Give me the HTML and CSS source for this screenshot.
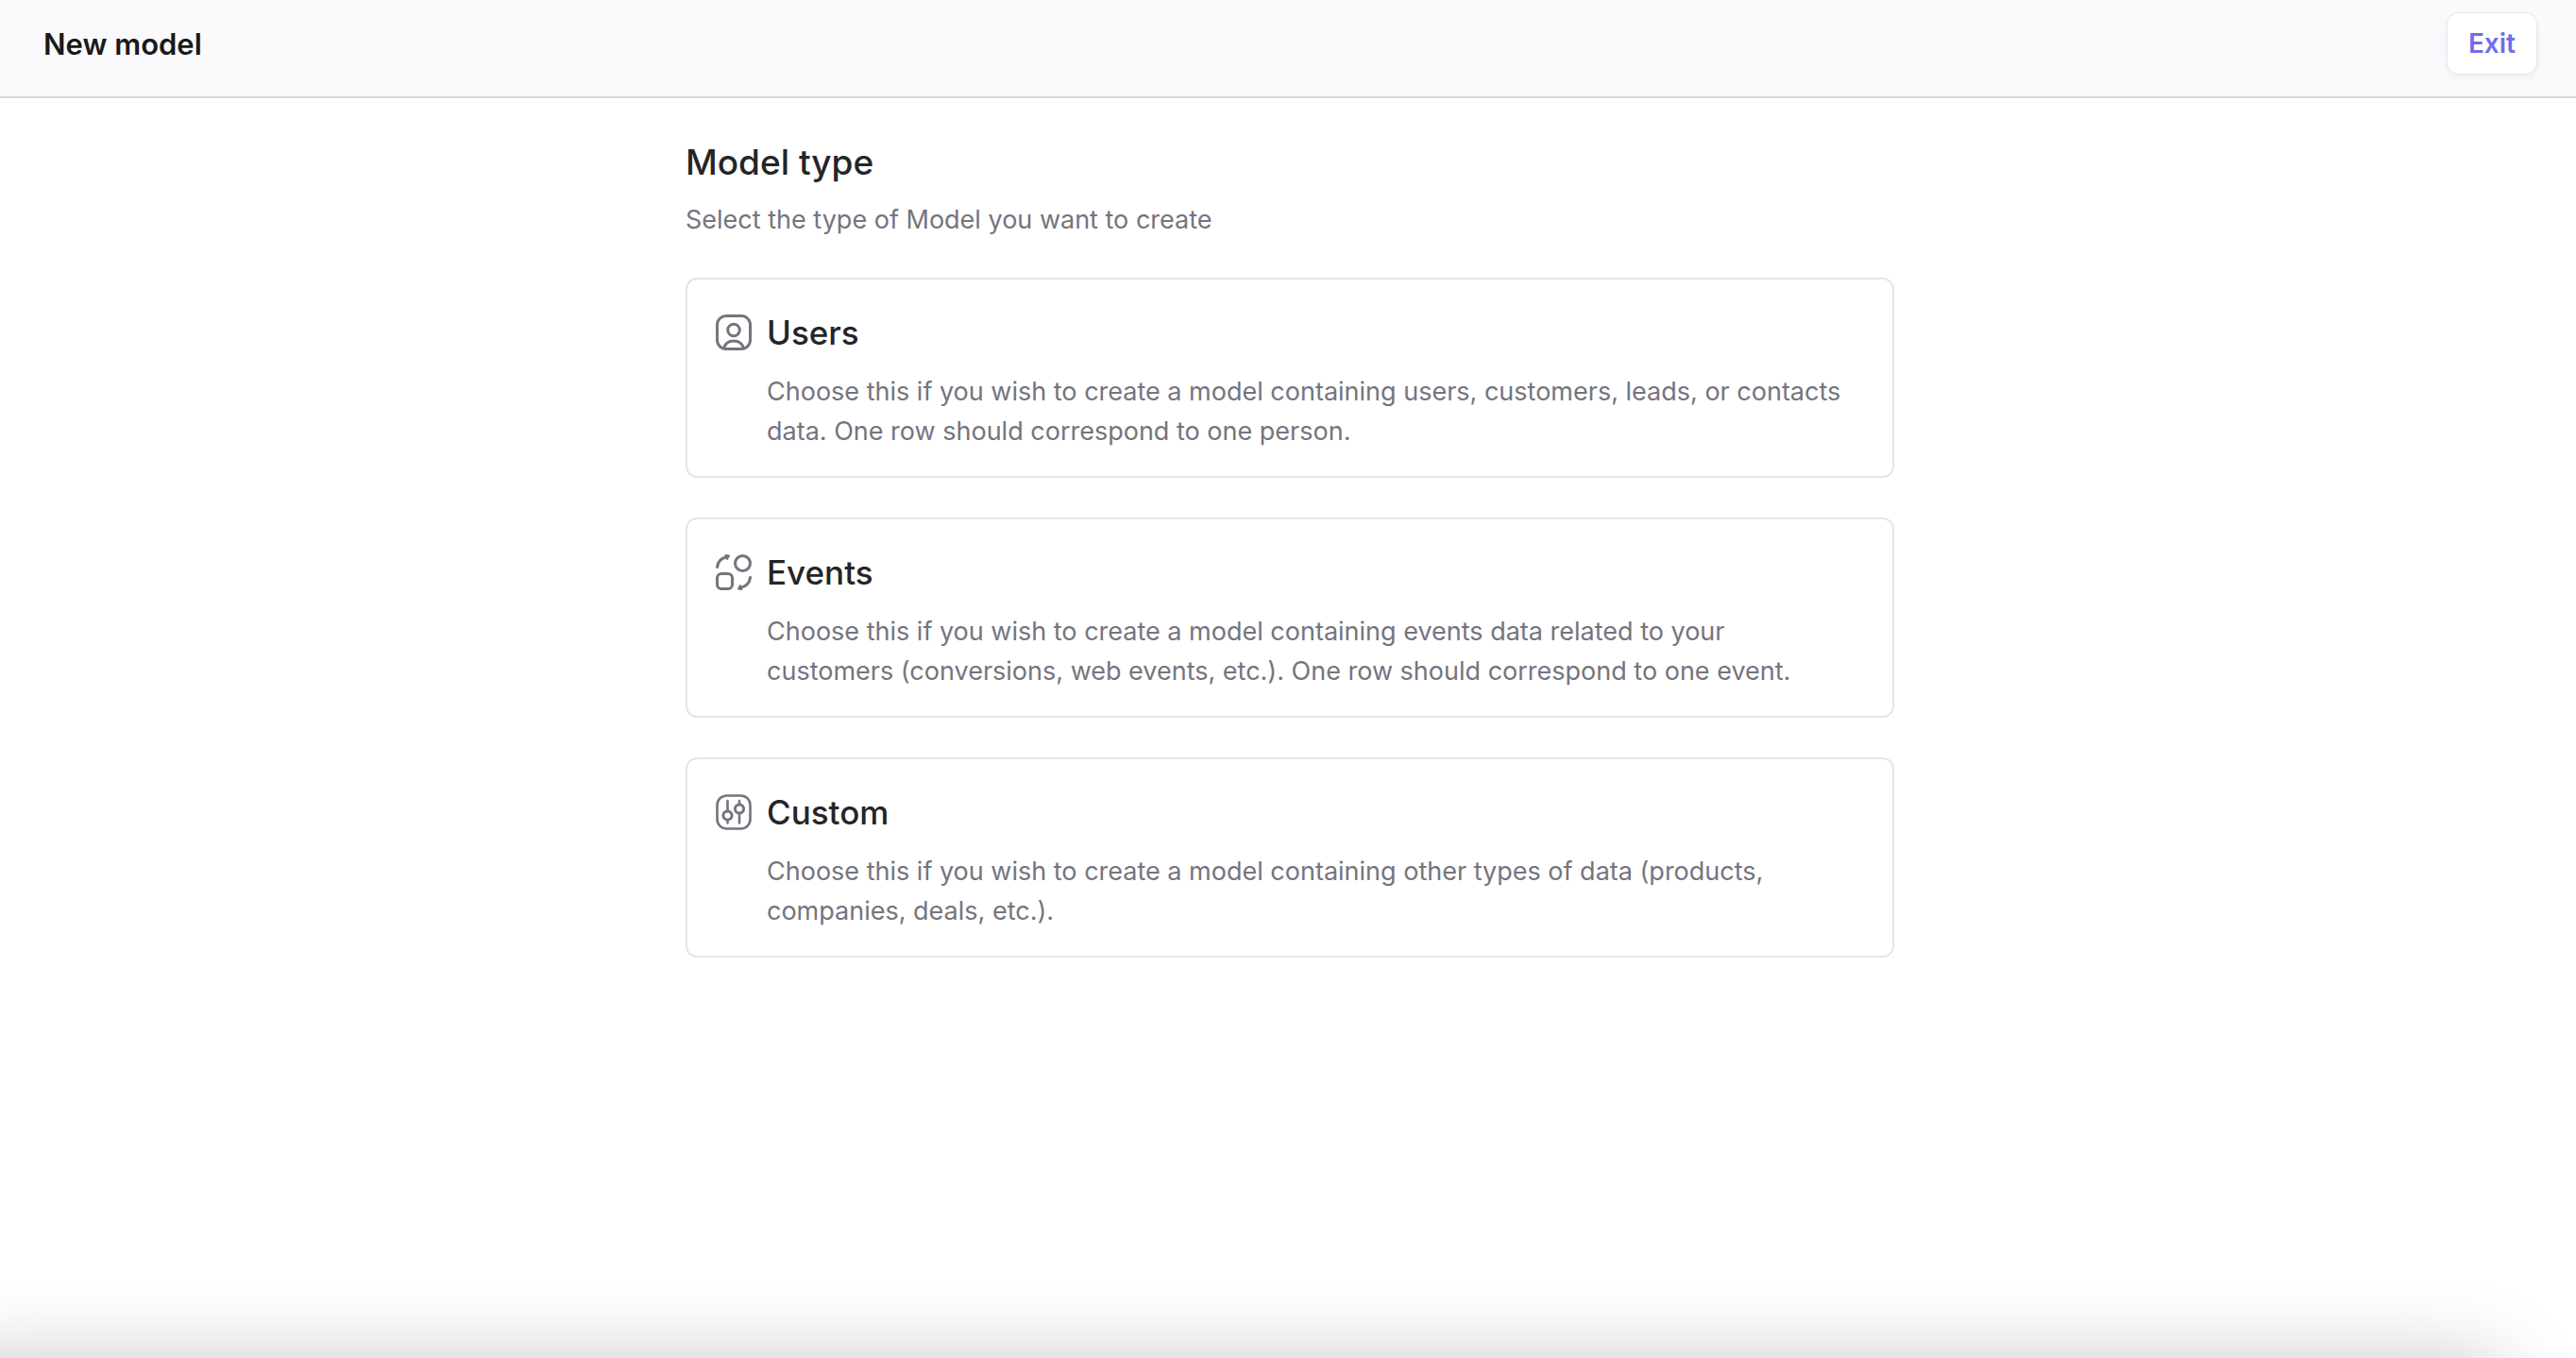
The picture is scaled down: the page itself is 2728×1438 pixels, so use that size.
FILE: index.html
```html
<!DOCTYPE html>
<html lang="en">
<head>
  <meta charset="UTF-8" />
  <meta name="viewport" content="width=device-width, initial-scale=1.0"/>
  <title>New model</title>
  <link rel="stylesheet" href="styles.css">
</head>
<body>
  <header class="topbar">
    <h1>New model</h1>
    <button class="exit-btn" type="button">Exit</button>
  </header>

  <main class="container">
    <h2>Model type</h2>
    <p class="intro">Select the type of Model you want to create</p>

    <div class="cards">
      <button class="card" type="button">
        <svg class="icon" viewBox="0 0 38 38" aria-hidden="true">
          <rect x="1.5" y="1.5" width="35" height="35" rx="9.5"/>
          <circle cx="19" cy="16.5" r="6.3"/>
          <path d="M8.5 35.5c1.5-5 5.5-7.5 10.5-7.5s9 2.5 10.5 7.5"/>
        </svg>
        <span class="card-body">
          <span class="card-title">Users</span>
          <span class="card-text">Choose this if you wish to create a model containing users, customers, leads, or contacts data. One row should correspond to one person.</span>
        </span>
      </button>

      <button class="card" type="button">
        <svg class="icon" viewBox="0 0 38 38" aria-hidden="true">
          <circle cx="28.5" cy="9.5" r="8"/>
          <rect x="1.5" y="20.5" width="16" height="16" rx="4.5"/>
          <path d="M1.5 13.5C2 8 6 3.5 11.5 3M36.5 24.5c-.5 5.5-4.5 10-10 10.5"/>
          <path class="arrow" d="M10.5 1l3.5.5-2 3.5zM27.5 37l-3.5-.5 2-3.5z"/>
        </svg>
        <span class="card-body">
          <span class="card-title">Events</span>
          <span class="card-text">Choose this if you wish to create a model containing events data related to your customers (conversions, web events, etc.). One row should correspond to one event.</span>
        </span>
      </button>

      <button class="card" type="button">
        <svg class="icon" viewBox="0 0 38 38" aria-hidden="true">
          <rect class="thin" x="1.5" y="1.5" width="35" height="35" rx="10"/>
          <circle cx="12.5" cy="22.5" r="4.6"/>
          <circle cx="25" cy="15.5" r="4.6"/>
          <path class="thin" d="M12.5 7v10M12.5 27.5v3M25 7v3.5M25 20.5v10"/>
        </svg>
        <span class="card-body">
          <span class="card-title">Custom</span>
          <span class="card-text">Choose this if you wish to create a model containing other types of data (products, companies, deals, etc.).</span>
        </span>
      </button>
    </div>
  </main>

  <div class="bottom-shade"></div>
</body>
</html>
```
FILE: styles.css
```css
* {
  box-sizing: border-box;
}
body {
  margin: 0;
  min-height: 100vh;
  display: flex;
  flex-direction: column;
  overflow-x: hidden;
  font-family: Inter, sans-serif;
  color: #252527;
  background: white;
}
.topbar {
  display: flex;
  align-items: center;
  justify-content: space-between;
  padding: 14px 42px 24px 46px;
  background: #fafafc;
  border-bottom: 2px solid #d8d7dd;
}
h1 {
  margin: 0;
  font-size: 31px;
  font-weight: 600;
  color: #19191b;
}
.exit-btn {
  height: 64px;
  padding: 0 22px;
  font: 600 28px Inter, sans-serif;
  color: #716ced;
  background: white;
  border: none;
  border-radius: 12px;
  box-shadow: 0 0 2px 1px rgba(30,30,50,0.08), 0 4px 10px rgba(80,70,160,0.06);
  cursor: pointer;
}
.container {
  width: 100%;
  max-width: 1284px;
  margin: 0 auto;
  padding: 44px 0 42px 4px;
}
h2 {
  margin: 0;
  font-size: 37px;
  line-height: 48px;
  font-weight: 500;
}
.intro {
  margin: 16px 0 40px;
  font-size: 27px;
  line-height: 42px;
  color: #75747e;
}
.cards {
  display: flex;
  flex-direction: column;
  gap: 42px;
}
.card {
  display: flex;
  gap: 16px;
  padding: 32px 42px 26px 30px;
  font-family: inherit;
  text-align: left;
  background: white;
  border: 2px solid #e5e5ea;
  border-radius: 12px;
  cursor: pointer;
}
.icon {
  flex: none;
  width: 38px;
  height: 38px;
  margin-top: 5px;
  fill: none;
  stroke: #75747e;
  stroke-width: 3;
  stroke-linecap: round;
  stroke-linejoin: round;
}
.icon .thin {
  stroke-width: 2.6;
}
.icon .arrow {
  fill: #75747e;
  stroke-width: 2;
}
.card-body {
  display: flex;
  flex-direction: column;
  gap: 18px;
}
.card-title {
  font-size: 35px;
  line-height: 48px;
  font-weight: 500;
  color: #252527;
}
.card-text {
  font-size: 27px;
  line-height: 42px;
  color: #75747e;
}
/* empty strip at the bottom edge, only there to cast the shadow */
.bottom-shade {
  flex: none;
  height: 0;
  margin-top: auto;
  margin-right: 144px;
  box-shadow: 0 70px 90px 60px rgba(0,0,0,0.28);
}
```
